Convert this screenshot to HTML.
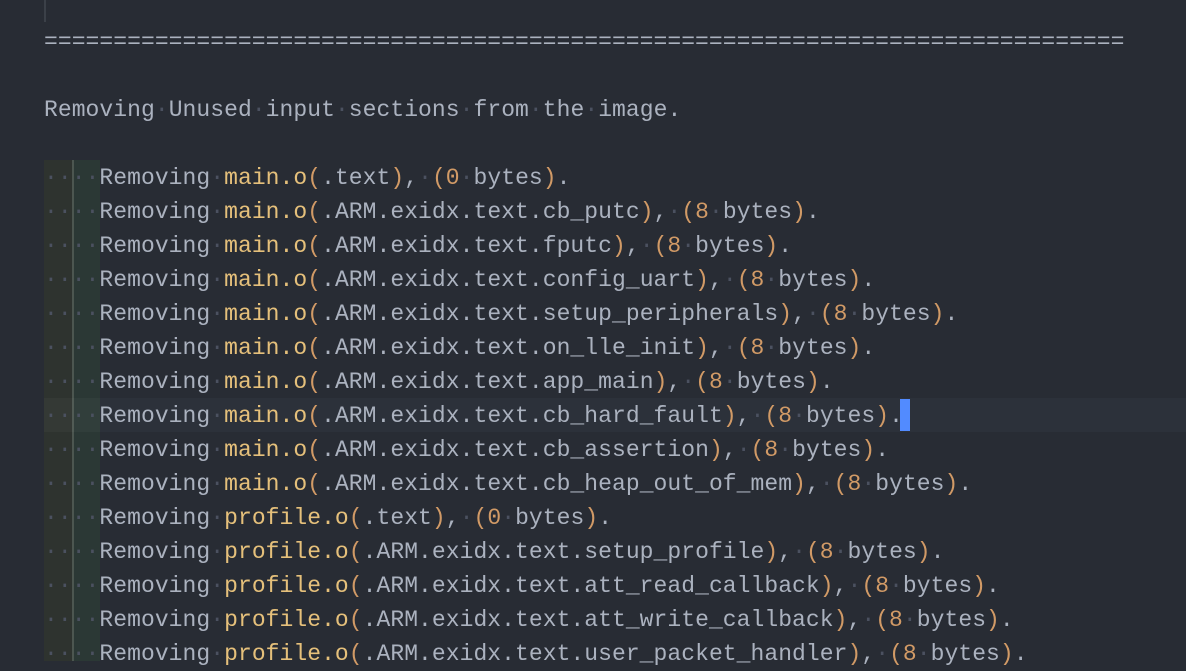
<!DOCTYPE html>
<html><head><meta charset="utf-8"><style>
html,body{margin:0;padding:0;background:#282c34;width:1186px;height:661px;overflow:hidden}
.ed{position:absolute;left:0;top:0;width:1186px;height:661px}
.r{position:absolute;left:44px;height:34px;line-height:34px;margin-top:1px;font-family:"Liberation Mono",monospace;font-size:23px;letter-spacing:0.05px;color:#abb2bf;white-space:pre}
.y{color:#e5c07b}.o{color:#d19a66}.d{color:#4b5160}
.g1{position:absolute;left:44px;top:160px;width:28px;height:501px;background:#2e332f}
.g2{position:absolute;left:72px;top:160px;width:28px;height:501px;background:#2b3835}
.gl{position:absolute;left:72px;top:160px;width:2px;height:501px;background:#4c5650}
.hl{position:absolute;left:100px;top:398px;width:1086px;height:34px;background:#2c313a}
.hl0{position:absolute;left:44px;top:398px;width:56px;height:34px;background:rgba(255,255,255,0.03)}
.cur{position:absolute;left:900px;top:399px;width:10px;height:32px;background:#528bff}
.tg{position:absolute;left:44px;top:0;width:2px;height:22px;background:#3b4048}
</style></head><body><div class="ed">
<div class="tg"></div>
<div class="g1"></div><div class="g2"></div><div class="gl"></div>
<div class="hl"></div><div class="hl0"></div>
<div class="r" style="top:24px">==============================================================================</div>
<div class="r" style="top:92px">Removing<span class="d">·</span>Unused<span class="d">·</span>input<span class="d">·</span>sections<span class="d">·</span>from<span class="d">·</span>the<span class="d">·</span>image.</div>
<div class="r" style="top:160px"><span class="d">····</span>Removing<span class="d">·</span><span class="y">main.o</span><span class="o">(</span>.text<span class="o">)</span>,<span class="d">·</span><span class="o">(0</span><span class="d">·</span>bytes<span class="o">)</span>.</div>
<div class="r" style="top:194px"><span class="d">····</span>Removing<span class="d">·</span><span class="y">main.o</span><span class="o">(</span>.ARM.exidx.text.cb_putc<span class="o">)</span>,<span class="d">·</span><span class="o">(8</span><span class="d">·</span>bytes<span class="o">)</span>.</div>
<div class="r" style="top:228px"><span class="d">····</span>Removing<span class="d">·</span><span class="y">main.o</span><span class="o">(</span>.ARM.exidx.text.fputc<span class="o">)</span>,<span class="d">·</span><span class="o">(8</span><span class="d">·</span>bytes<span class="o">)</span>.</div>
<div class="r" style="top:262px"><span class="d">····</span>Removing<span class="d">·</span><span class="y">main.o</span><span class="o">(</span>.ARM.exidx.text.config_uart<span class="o">)</span>,<span class="d">·</span><span class="o">(8</span><span class="d">·</span>bytes<span class="o">)</span>.</div>
<div class="r" style="top:296px"><span class="d">····</span>Removing<span class="d">·</span><span class="y">main.o</span><span class="o">(</span>.ARM.exidx.text.setup_peripherals<span class="o">)</span>,<span class="d">·</span><span class="o">(8</span><span class="d">·</span>bytes<span class="o">)</span>.</div>
<div class="r" style="top:330px"><span class="d">····</span>Removing<span class="d">·</span><span class="y">main.o</span><span class="o">(</span>.ARM.exidx.text.on_lle_init<span class="o">)</span>,<span class="d">·</span><span class="o">(8</span><span class="d">·</span>bytes<span class="o">)</span>.</div>
<div class="r" style="top:364px"><span class="d">····</span>Removing<span class="d">·</span><span class="y">main.o</span><span class="o">(</span>.ARM.exidx.text.app_main<span class="o">)</span>,<span class="d">·</span><span class="o">(8</span><span class="d">·</span>bytes<span class="o">)</span>.</div>
<div class="r" style="top:398px"><span class="d">····</span>Removing<span class="d">·</span><span class="y">main.o</span><span class="o">(</span>.ARM.exidx.text.cb_hard_fault<span class="o">)</span>,<span class="d">·</span><span class="o">(8</span><span class="d">·</span>bytes<span class="o">)</span>.</div>
<div class="r" style="top:432px"><span class="d">····</span>Removing<span class="d">·</span><span class="y">main.o</span><span class="o">(</span>.ARM.exidx.text.cb_assertion<span class="o">)</span>,<span class="d">·</span><span class="o">(8</span><span class="d">·</span>bytes<span class="o">)</span>.</div>
<div class="r" style="top:466px"><span class="d">····</span>Removing<span class="d">·</span><span class="y">main.o</span><span class="o">(</span>.ARM.exidx.text.cb_heap_out_of_mem<span class="o">)</span>,<span class="d">·</span><span class="o">(8</span><span class="d">·</span>bytes<span class="o">)</span>.</div>
<div class="r" style="top:500px"><span class="d">····</span>Removing<span class="d">·</span><span class="y">profile.o</span><span class="o">(</span>.text<span class="o">)</span>,<span class="d">·</span><span class="o">(0</span><span class="d">·</span>bytes<span class="o">)</span>.</div>
<div class="r" style="top:534px"><span class="d">····</span>Removing<span class="d">·</span><span class="y">profile.o</span><span class="o">(</span>.ARM.exidx.text.setup_profile<span class="o">)</span>,<span class="d">·</span><span class="o">(8</span><span class="d">·</span>bytes<span class="o">)</span>.</div>
<div class="r" style="top:568px"><span class="d">····</span>Removing<span class="d">·</span><span class="y">profile.o</span><span class="o">(</span>.ARM.exidx.text.att_read_callback<span class="o">)</span>,<span class="d">·</span><span class="o">(8</span><span class="d">·</span>bytes<span class="o">)</span>.</div>
<div class="r" style="top:602px"><span class="d">····</span>Removing<span class="d">·</span><span class="y">profile.o</span><span class="o">(</span>.ARM.exidx.text.att_write_callback<span class="o">)</span>,<span class="d">·</span><span class="o">(8</span><span class="d">·</span>bytes<span class="o">)</span>.</div>
<div class="r" style="top:636px"><span class="d">····</span>Removing<span class="d">·</span><span class="y">profile.o</span><span class="o">(</span>.ARM.exidx.text.user_packet_handler<span class="o">)</span>,<span class="d">·</span><span class="o">(8</span><span class="d">·</span>bytes<span class="o">)</span>.</div>
<div class="cur"></div>
</div></body></html>
